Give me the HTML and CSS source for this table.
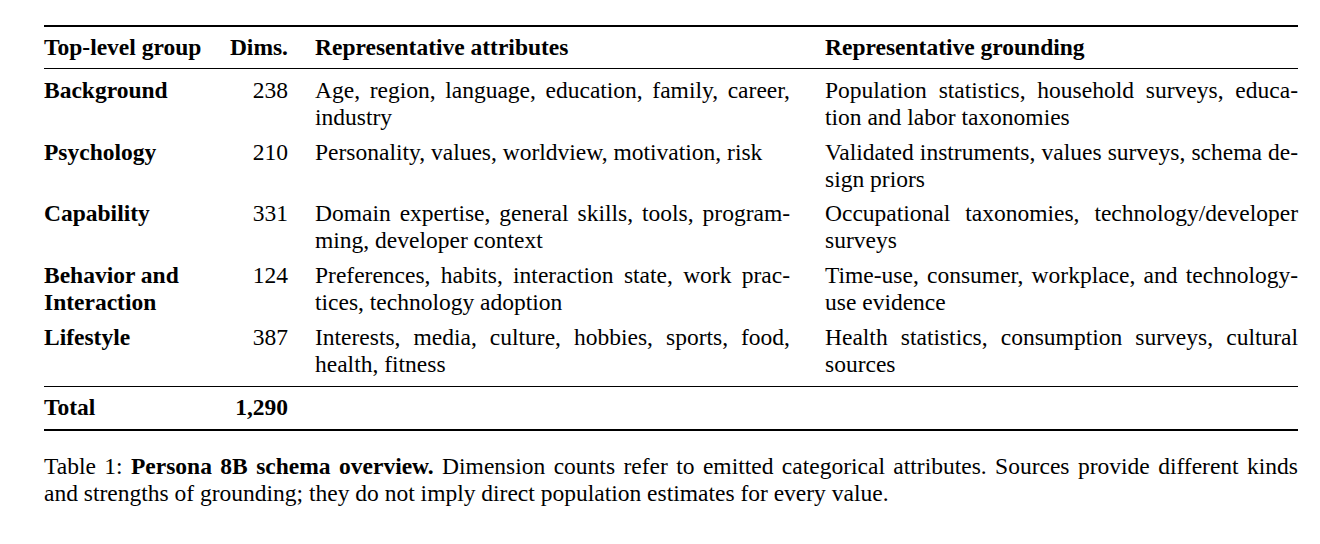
FILE: index.html
```html
<!DOCTYPE html>
<html lang="en">
<head>
<meta charset="utf-8">
<title>Table 1: Persona 8B schema overview</title>
<link rel="stylesheet" href="styles.css">
</head>
<body>
<div class="page">
  <div class="tbl">
    <div class="row head">
      <div class="c1">Top-level group</div>
      <div class="c2">Dims.</div>
      <div class="c3">Representative attributes</div>
      <div class="c4">Representative grounding</div>
    </div>
    <div class="body">
      <div class="row">
        <div class="c1 b">Background</div>
        <div class="c2">238</div>
        <div class="c3"><span class="ln j">Age, region, language, education, family, career,</span><span class="ln">industry</span></div>
        <div class="c4"><span class="ln j">Population statistics, household surveys, educa-</span><span class="ln">tion and labor taxonomies</span></div>
      </div>
      <div class="row">
        <div class="c1 b">Psychology</div>
        <div class="c2">210</div>
        <div class="c3"><span class="ln">Personality, values, worldview, motivation, risk</span></div>
        <div class="c4"><span class="ln j">Validated instruments, values surveys, schema de-</span><span class="ln">sign priors</span></div>
      </div>
      <div class="row">
        <div class="c1 b">Capability</div>
        <div class="c2">331</div>
        <div class="c3"><span class="ln j">Domain expertise, general skills, tools, program-</span><span class="ln">ming, developer context</span></div>
        <div class="c4"><span class="ln j">Occupational taxonomies, technology/developer</span><span class="ln">surveys</span></div>
      </div>
      <div class="row">
        <div class="c1 b"><span class="ln">Behavior and</span><span class="ln">Interaction</span></div>
        <div class="c2">124</div>
        <div class="c3"><span class="ln j">Preferences, habits, interaction state, work prac-</span><span class="ln">tices, technology adoption</span></div>
        <div class="c4"><span class="ln j">Time-use, consumer, workplace, and technology-</span><span class="ln">use evidence</span></div>
      </div>
      <div class="row">
        <div class="c1 b">Lifestyle</div>
        <div class="c2">387</div>
        <div class="c3"><span class="ln j">Interests, media, culture, hobbies, sports, food,</span><span class="ln">health, fitness</span></div>
        <div class="c4"><span class="ln j">Health statistics, consumption surveys, cultural</span><span class="ln">sources</span></div>
      </div>
    </div>
    <div class="row total">
      <div class="c1 b">Total</div>
      <div class="c2 b">1,290</div>
      <div class="c3"></div>
      <div class="c4"></div>
    </div>
  </div>
  <p class="caption"><span class="ln j">Table 1: <b>Persona 8B schema overview.</b> Dimension counts refer to emitted categorical attributes. Sources provide different kinds</span><span class="ln">and strengths of grounding; they do not imply direct population estimates for every value.</span></p>
</div>
</body>
</html>
```
FILE: styles.css
```css
html, body {
  margin: 0;
  padding: 0;
  background: #ffffff;
}

body {
  font-family: "Liberation Serif", "Times New Roman", serif;
  font-size: 23.5px;
  line-height: 27px;
  color: #000000;
}

.page {
  padding: 25px 22px 0 44px;
  width: 1254px;
}

.tbl {
  border-top: 2px solid #000000;
  border-bottom: 2px solid #000000;
}

.row {
  display: grid;
  grid-template-columns: 160px 84px 502px 508px;
}

.row > .c2 { margin-left: 25px; text-align: right; white-space: nowrap; }
.row > .c3 { margin-left: 27px; }
.row > .c4 { margin-left: 35px; }

.head {
  font-weight: bold;
  padding: 7px 0 7px;
  border-bottom: 1px solid #000000;
}

.head > div { white-space: nowrap; }

.body {
  padding-bottom: 8px;
  border-bottom: 1px solid #000000;
}

.body .row {
  padding-top: 7.75px;
}

.total {
  padding: 7px 0 8px;
}

.b { font-weight: bold; }

.ln { display: block; white-space: nowrap; }

.j {
  text-align: justify;
  text-align-last: justify;
}

.caption {
  margin: 22px 0 0;
}
```
